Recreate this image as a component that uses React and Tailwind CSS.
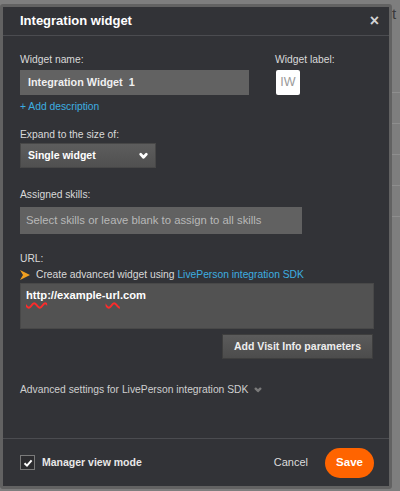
import React from "react";

const font = { fontFamily: '"Liberation Sans", Arial, sans-serif' };

const Chevron = ({ className }) => (
  <svg viewBox="0 0 10 8" className={className}>
    <path
      d="M2 2.2 L5 5.4 L8 2.2"
      stroke="currentColor"
      strokeWidth="3.2"
      strokeLinecap="round"
      strokeLinejoin="round"
      fill="none"
    />
  </svg>
);

const App = () => {
  return (
    <div className="relative w-[400px] h-[491px] overflow-hidden bg-[#7e7e7e]" style={font}>
      {/* background table rows behind modal */}
      <div className="absolute right-0 top-[6px] w-[8px] text-[15px] text-[#3a3a3a] leading-none">t</div>
      <div className="absolute right-0 top-[92px] w-[10px] flex flex-col">
        {[0, 1, 2, 3, 4].map((i) => (
          <div key={i} className="h-[31px] border-t border-[#8e8e8e]" />
        ))}
      </div>

      <div className="absolute left-0 top-[4px] w-[392px] h-[485px] border-[3px] border-[#626262] rounded-[3px] bg-[#323337] flex flex-col">
        {/* header */}
        <div className="h-[29px] flex items-center justify-between pl-[17px] pr-[10px] border-b border-[#4b4c50]">
          <span className="text-[13px] font-bold text-white">Integration widget</span>
          <span className="text-[16px] font-bold text-[#d4d4d4] leading-none">×</span>
        </div>

        {/* body */}
        <div className="flex-1 pl-[17px] pr-[16px] pt-[17px] text-[10.3px] text-[#d9d9d9]">
          <div className="flex gap-[26px]">
            <div className="flex flex-col">
              <label className="leading-[13px]">Widget name:</label>
              <div className="mt-[4px] w-[229px] h-[25px] bg-[#626262] flex items-center pl-[8px] text-[10.8px] font-bold text-[#f0f0f0]">
                Integration Widget&nbsp;&nbsp;1
              </div>
            </div>
            <div className="flex flex-col">
              <label className="leading-[13px]">Widget label:</label>
              <div className="mt-[4px] ml-[1px] w-[24px] h-[25px] bg-white rounded-[2px] flex items-center justify-center text-[12.5px] text-[#9a9a9a]">
                IW
              </div>
            </div>
          </div>
          <div className="mt-[5px] leading-[13px] text-[#3daee0]">+ Add description</div>

          <div className="mt-[15px] leading-[13px]">Expand to the size of:</div>
          <div className="mt-[2px] w-[136px] h-[25px] bg-gradient-to-b from-[#5d5d5d] to-[#505050] border border-[#474747] flex items-center justify-between pl-[7px] pr-[7px] text-[10.5px] font-bold text-white">
            <span>Single widget</span>
            <Chevron className="w-[9px] h-[8px] text-white" />
          </div>

          <div className="mt-[20px] leading-[13px]">Assigned skills:</div>
          <div className="mt-[6px] w-[282px] h-[27px] bg-[#616161] flex items-center pl-[6px] text-[11.3px] text-[#b8b8b8]">
            Select skills or leave blank to assign to all skills
          </div>

          <div className="mt-[18px] leading-[13px]">URL:</div>
          <div className="mt-[3px] flex items-center gap-[6px] leading-[13px]">
            <svg viewBox="0 0 10 10" className="w-[10px] h-[10px]">
              <path d="M0 0 L10 5 L0 10 L3 5 Z" fill="#f0a020" />
            </svg>
            <span>
              Create advanced widget using <span className="text-[#3daee0]">LivePerson integration SDK</span>
            </span>
          </div>
          <div className="mt-[2px] w-[354px] h-[46px] bg-[#525252] border border-[#484848] px-[5px] pt-[3px] text-[11.2px] font-bold text-white">
            <span className="underline decoration-wavy decoration-[#ff2a2a] decoration-[1.5px] underline-offset-[3px]">http</span>
            ://example-
            <span className="underline decoration-wavy decoration-[#ff2a2a] decoration-[1.5px] underline-offset-[3px]">url</span>
            .com
          </div>
          <div className="flex justify-end mt-[5px]">
            <button className="w-[151px] h-[25px] bg-gradient-to-b from-[#5b5b5b] to-[#4c4c4c] border border-[#3e3e3e] text-[10.5px] font-bold text-[#eeeeee]">
              Add Visit Info parameters
            </button>
          </div>

          <div className="mt-[24px] flex items-center gap-[6px] leading-[13px] text-[#cfcfcf]">
            <span>Advanced settings for LivePerson integration SDK</span>
            <Chevron className="w-[8px] h-[6px] text-[#7a7a7a]" />
          </div>
        </div>

        {/* footer */}
        <div className="h-[48px] border-t border-[#4b4c50] flex items-center pl-[17px] pr-[15px]">
          <div className="w-[15px] h-[15px] border border-[#7a7a7a] bg-[#2c2c2f] flex items-center justify-center">
            <svg viewBox="0 0 10 10" className="w-[10px] h-[10px]">
              <path d="M1.5 5.2 L4 7.6 L8.6 2.4" stroke="white" strokeWidth="2" fill="none" />
            </svg>
          </div>
          <span className="ml-[7px] text-[10.5px] font-bold text-[#e8e8e8]">Manager view mode</span>
          <span className="ml-auto text-[11px] text-[#dcdcdc]">Cancel</span>
          <button className="ml-[17px] w-[49px] h-[30px] rounded-full bg-[#ff6400] text-[11.5px] font-bold text-white">
            Save
          </button>
        </div>
      </div>
    </div>
  );
};

export default App;
